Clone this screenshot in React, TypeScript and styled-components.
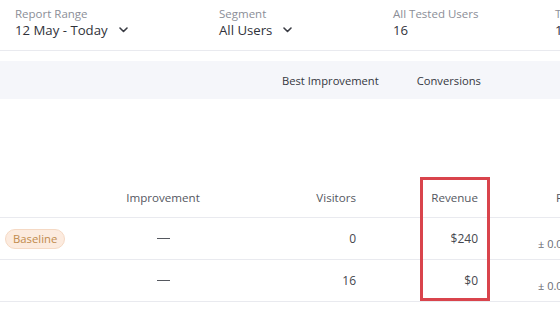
import styled, { createGlobalStyle } from 'styled-components'

const GlobalStyle = createGlobalStyle`
  html, body {
    margin: 0;
    padding: 0;
    background: #ffffff;
    font-family: 'Open Sans', 'Noto Sans', sans-serif;
    overflow: hidden;
  }
`

const Page = styled.div`
  width: 560px;
  height: 315px;
  overflow: hidden;
  background: #fff;
`

const TopBar = styled.div`
  display: flex;
  height: 50px;
  padding-left: 15px;
  border-bottom: 1px solid #e9eaef;
  box-sizing: content-box;
  white-space: nowrap;
`

const Filter = styled.div<{ width: number }>`
  flex: 0 0 ${({ width }) => width}px;
  display: flex;
  flex-direction: column;
  padding-top: 6px;
`

const FilterLabel = styled.div`
  font-size: 11.5px;
  line-height: 15px;
  color: #8b8e97;
`

const FilterValue = styled.div`
  display: flex;
  align-items: center;
  gap: 11px;
  font-size: 13.2px;
  line-height: 18px;
  color: #30323a;
`

const Chevron = () => (
  <svg width="9" height="6" viewBox="0 0 9 6" fill="none">
    <path d="M1 1l3.5 3.5L8 1" stroke="#3a3c44" strokeWidth="1.6" strokeLinecap="round" strokeLinejoin="round" />
  </svg>
)

const TabBand = styled.div`
  box-sizing: border-box;
  margin-top: 10px;
  height: 38px;
  background: #f5f6fa;
  display: flex;
  align-items: center;
  padding-left: 282px;
  padding-top: 1px;
  gap: 38px;
`

const Tab = styled.div`
  font-size: 11.2px;
  color: #34363e;
  white-space: nowrap;
`

const TableWrap = styled.div`
  position: relative;
  margin-top: 78px;
`

const Row = styled.div<{ head?: boolean }>`
  display: grid;
  grid-template-columns: 106px 114px 146px 122px 50px 40px;
  height: ${({ head }) => (head ? 40 : 41)}px;
  border-bottom: 1px solid #e9eaef;
  white-space: nowrap;
`

const Cell = styled.div<{ align?: 'left' | 'center' | 'right'; head?: boolean; indent?: number }>`
  display: flex;
  align-items: center;
  justify-content: ${({ align }) => (align === 'right' ? 'flex-end' : align === 'center' ? 'center' : 'flex-start')};
  padding-right: ${({ align }) => (align === 'right' ? 10 : 0)}px;
  padding-left: ${({ indent = 0 }) => indent}px;
  font-size: ${({ head }) => (head ? 11.6 : 12)}px;
  color: ${({ head }) => (head ? '#55585f' : '#45474e')};
`

const ErrorCell = styled.div`
  display: flex;
  align-items: flex-end;
  padding-bottom: 8px;
  font-size: 11px;
  color: #6a6d74;
`

const Pill = styled.span`
  margin-left: 5px;
  padding: 1px 7px;
  border-radius: 10px;
  background: #fcebdf;
  border: 1px solid #f5d9c4;
  color: #c08a4c;
  font-size: 11.3px;
  line-height: 16px;
`

const Dash = styled.span`
  display: inline-block;
  width: 13px;
  height: 1.5px;
  background: #55585f;
`

// annotation drawn over the revenue column
const Highlight = styled.div`
  position: absolute;
  left: 420px;
  top: 0;
  width: 64px;
  height: 118px;
  border: 3px solid #d9444c;
  pointer-events: none;
`

const filters = [
  { label: 'Report Range', value: '12 May - Today', chevron: true, width: 204 },
  { label: 'Segment', value: 'All Users', chevron: true, width: 174 },
  { label: 'All Tested Users', value: '16', chevron: false, width: 162 },
  { label: 'Total', value: '16', chevron: false, width: 120 },
]

const rows = [
  { baseline: true, visitors: '0', revenue: '$240' },
  { baseline: false, visitors: '16', revenue: '$0' },
]

export default function App() {
  return (
    <Page>
      <GlobalStyle />
      <TopBar>
        {filters.map((f) => (
          <Filter key={f.label} width={f.width}>
            <FilterLabel>{f.label}</FilterLabel>
            <FilterValue>
              {f.value}
              {f.chevron && <Chevron />}
            </FilterValue>
          </Filter>
        ))}
      </TopBar>
      <TabBand>
        <Tab>Best Improvement</Tab>
        <Tab>Conversions</Tab>
      </TabBand>
      <TableWrap>
        <Row head>
          <Cell head />
          <Cell head align="center">Improvement</Cell>
          <Cell head align="right">Visitors</Cell>
          <Cell head align="right">Revenue</Cell>
          <Cell head />
          <Cell head indent={18}>Probability</Cell>
        </Row>
        {rows.map((r, i) => (
          <Row key={i}>
            <Cell>{r.baseline && <Pill>Baseline</Pill>}</Cell>
            <Cell align="center">
              <Dash />
            </Cell>
            <Cell align="right">{r.visitors}</Cell>
            <Cell align="right">{r.revenue}</Cell>
            <Cell />
            <ErrorCell>± 0.00%</ErrorCell>
          </Row>
        ))}
        <Highlight />
      </TableWrap>
    </Page>
  )
}
